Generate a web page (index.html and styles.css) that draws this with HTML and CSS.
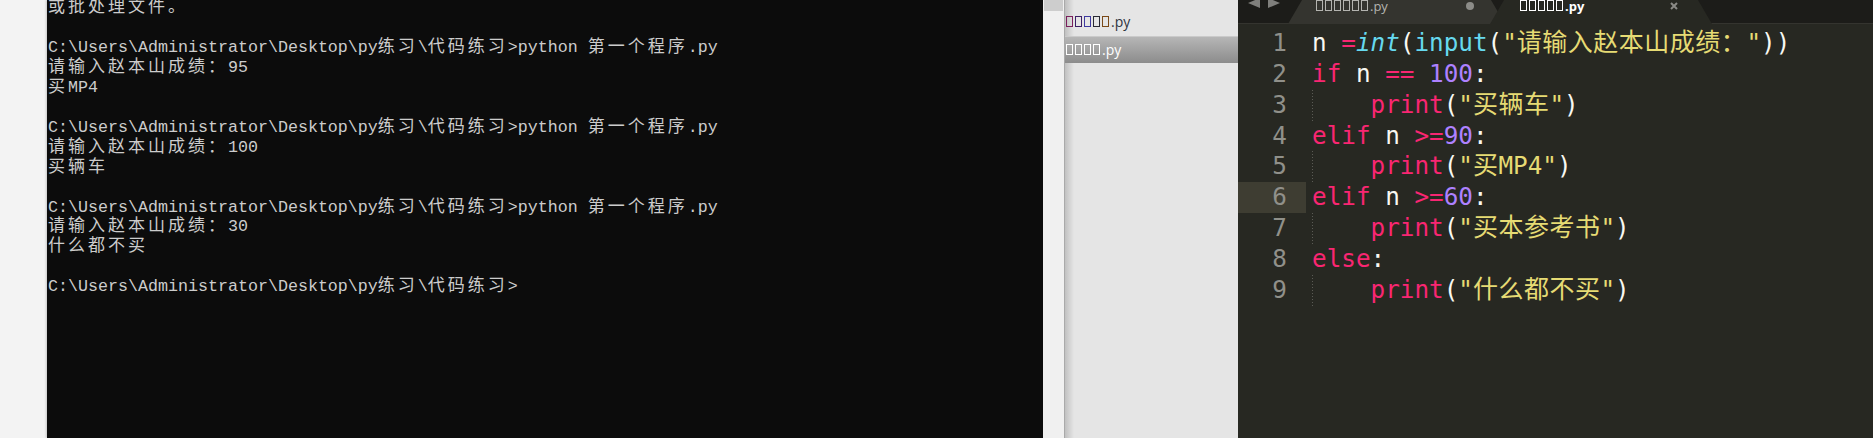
FILE: index.html
```html
<!DOCTYPE html>
<html>
    <head>
        <meta charset="utf-8">
        <title>py练习</title>
        <link rel="stylesheet" href="styles.css">
    </head>
    <body>
        <div class="desk"></div>

        <!-- cmd window -->
        <div class="console">
<pre class="out"><span class="cj">或批处理文件。</span>

C:\Users\Administrator\Desktop\py<span class="cj">练习</span>\<span class="cj">代码练习</span>&gt;python <span class="cj">第一个程序</span>.py
<span class="cj">请输入赵本山成绩：</span>95
<span class="cj">买</span>MP4

C:\Users\Administrator\Desktop\py<span class="cj">练习</span>\<span class="cj">代码练习</span>&gt;python <span class="cj">第一个程序</span>.py
<span class="cj">请输入赵本山成绩：</span>100
<span class="cj">买辆车</span>

C:\Users\Administrator\Desktop\py<span class="cj">练习</span>\<span class="cj">代码练习</span>&gt;python <span class="cj">第一个程序</span>.py
<span class="cj">请输入赵本山成绩：</span>30
<span class="cj">什么都不买</span>

C:\Users\Administrator\Desktop\py<span class="cj">练习</span>\<span class="cj">代码练习</span>&gt;</pre>
        </div>
        <div class="scroll"><div class="thumb"></div></div>

        <!-- sublime sidebar -->
        <div class="sidebar">
            <div class="file">
                <span class="tofu c1"></span><span class="tofu c2"></span><span class="tofu c3"></span><span class="tofu c4"></span><span class="tofu c5"></span><span class="ext">.py</span>
            </div>
            <div class="file sel">
                <span class="tofu"></span><span class="tofu"></span><span class="tofu"></span><span class="tofu"></span><span class="ext">.py</span>
            </div>
        </div>

        <!-- sublime editor -->
        <div class="editor">
            <div class="tabbar">
                <div class="arrows">
                    <span class="arrow left"></span>
                    <span class="arrow right"></span>
                </div>
                <div class="tab tab-off">
                    <span class="title"><span class="tofu"></span><span class="tofu"></span><span class="tofu"></span><span class="tofu"></span><span class="tofu"></span><span class="tofu"></span>.py</span>
                    <span class="dot"></span>
                </div>
                <div class="tab tab-on">
                    <span class="title"><span class="tofu"></span><span class="tofu"></span><span class="tofu"></span><span class="tofu"></span><span class="tofu"></span>.py</span>
                    <svg class="close" width="8" height="8" viewBox="0 0 8 8">
                        <path d="M1 1L7 7M7 1L1 7" stroke="#8a8a86" stroke-width="2"/>
                    </svg>
                </div>
            </div>

            <div class="code">
                <div class="row"><div class="gut">1</div><div class="src">n <span class="k">=</span><span class="t">int</span>(<span class="b">input</span>(<span class="s">"<span class="cw">请输入赵本山成绩：</span>"</span>))</div></div>
                <div class="row"><div class="gut">2</div><div class="src"><span class="k">if</span> n <span class="k">==</span> <span class="n">100</span>:</div></div>
                <div class="row"><div class="gut">3</div><div class="src ind">    <span class="k">print</span>(<span class="s">"<span class="cw">买辆车</span>"</span>)</div></div>
                <div class="row"><div class="gut">4</div><div class="src"><span class="k">elif</span> n <span class="k">&gt;=</span><span class="n">90</span>:</div></div>
                <div class="row"><div class="gut">5</div><div class="src ind">    <span class="k">print</span>(<span class="s">"<span class="cw">买</span>MP4"</span>)</div></div>
                <div class="row"><div class="gut cur">6</div><div class="src"><span class="k">elif</span> n <span class="k">&gt;=</span><span class="n">60</span>:</div></div>
                <div class="row"><div class="gut">7</div><div class="src ind">    <span class="k">print</span>(<span class="s">"<span class="cw">买本参考书</span>"</span>)</div></div>
                <div class="row"><div class="gut">8</div><div class="src"><span class="k">else</span>:</div></div>
                <div class="row"><div class="gut">9</div><div class="src ind">    <span class="k">print</span>(<span class="s">"<span class="cw">什么都不买</span>"</span>)</div></div>
            </div>
        </div>
    </body>
</html>
```

FILE: styles.css
```css
*{
    box-sizing: border-box;
}
body{
    margin: 0;
    width: 1873px;
    height: 438px;
    display: flex;
    overflow: hidden;
    background-color: #f3f3f3;
}
.desk{
    width: 47px;
    background-color: #f3f3f3;
}

/* console */
.console{
    width: 996px;
    padding-left: 1px;
    background-color: #0c0c0c;
    color: #cccccc;
    box-shadow: -1px 0 2px rgba(0, 0, 0, 0.18);
    overflow: hidden;
}
.out{
    margin: -2px 0 0 0;
    font-family: "Liberation Mono", monospace;
    font-size: 16.67px;
    line-height: 19.95px;
}
.cj{
    font-family: "Noto Sans CJK SC", sans-serif;
    font-size: 17px;
    line-height: 14px;
    letter-spacing: 3px;
}
.scroll{
    width: 21px;
    background-color: #f0f0f0;
    padding-left: 1px;
}
.thumb{
    width: 19px;
    height: 11px;
    background-color: #cdcdcd;
}

/* sidebar */
.sidebar{
    width: 174px;
    padding-top: 9px;
    background: linear-gradient(to right, rgba(0, 0, 0, 0.16), rgba(0, 0, 0, 0) 9px), #e5e5e5;
    border-left: 1px solid #a9a9a9;
    font-family: "Open Sans", sans-serif;
    font-size: 14px;
    color: #2e3440;
}
.file{
    height: 27px;
    display: flex;
    align-items: center;
    padding-left: 1px;
    padding-bottom: 2px;
}
.file.sel{
    background: linear-gradient(#b6b6b6, #8c8c8c);
    border-top: 1px solid #cacaca;
    color: #ffffff;
}
.tofu{
    display: inline-block;
    width: 7px;
    height: 11px;
    margin-right: 2px;
    border: 1px solid currentColor;
}
.c1{ color: #7a1f5c; }
.c2{ color: #3d1f66; }
.c3{ color: #3f3aa0; }
.c4{ color: #2a2a35; }
.c5{ color: #7a4a18; }

/* editor */
.editor{
    flex: 1;
    background-color: #272822;
}
.tabbar{
    height: 24px;
    display: flex;
    background-color: #1c1c19;
    box-shadow: inset 0 -1px 0 #34342f;
    font-family: "Open Sans", sans-serif;
    font-size: 13px;
}
.arrows{
    width: 50px;
    display: flex;
    gap: 8px;
    padding: 0 0 0 10px;
}
.arrow{
    width: 0;
    height: 0;
    margin-top: -2px;
    border-top: 5px solid transparent;
    border-bottom: 5px solid transparent;
}
.arrow.left{
    border-right: 12px solid #7f7f7c;
}
.arrow.right{
    border-left: 12px solid #7f7f7c;
}
.tab{
    height: 24px;
    display: flex;
    align-items: flex-start;
    line-height: 12px;
    clip-path: polygon(0 100%, 14px 0, calc(100% - 14px) 0, 100% 100%);
}
.tab-off{
    width: 217px;
    padding: 0 31px 0 28px;
    background-color: #34342f;
    color: #b4b4b0;
}
.tab-on{
    width: 222px;
    margin-left: -15px;
    padding: 0 34px 0 30px;
    background-color: #272822;
    color: #ffffff;
    font-weight: bold;
}
.title{
    white-space: nowrap;
}
.dot{
    width: 8px;
    height: 8px;
    margin: 2px 0 0 auto;
    border-radius: 50%;
    background-color: #8c8c88;
}
.close{
    margin: 2px 0 0 auto;
}

.code{
    padding-top: 4px;
    font-family: "DejaVu Sans Mono", monospace;
    font-size: 24.3px;
    line-height: 30.85px;
    color: #f8f8f2;
}
.row{
    display: flex;
    height: 30.85px;
}
.gut{
    width: 68px;
    padding-right: 19px;
    text-align: right;
    color: #90908a;
}
.gut.cur{
    background-color: #3e3d32;
}
.src{
    padding-left: 6px;
    white-space: pre;
}
.src.ind{
    background: repeating-linear-gradient(to bottom, #5b5b55 0 1px, transparent 1px 3px) no-repeat 6px 0 / 1px 100%;
}
.k{ color: #f92672; }
.t{ color: #66d9ef; font-style: italic; }
.b{ color: #66d9ef; }
.s{ color: #e6db74; }
.n{ color: #ae81ff; }
.cw{
    font-family: "Noto Sans CJK SC", sans-serif;
    font-size: 25px;
    line-height: 20px;
    letter-spacing: 0.5px;
}
```
